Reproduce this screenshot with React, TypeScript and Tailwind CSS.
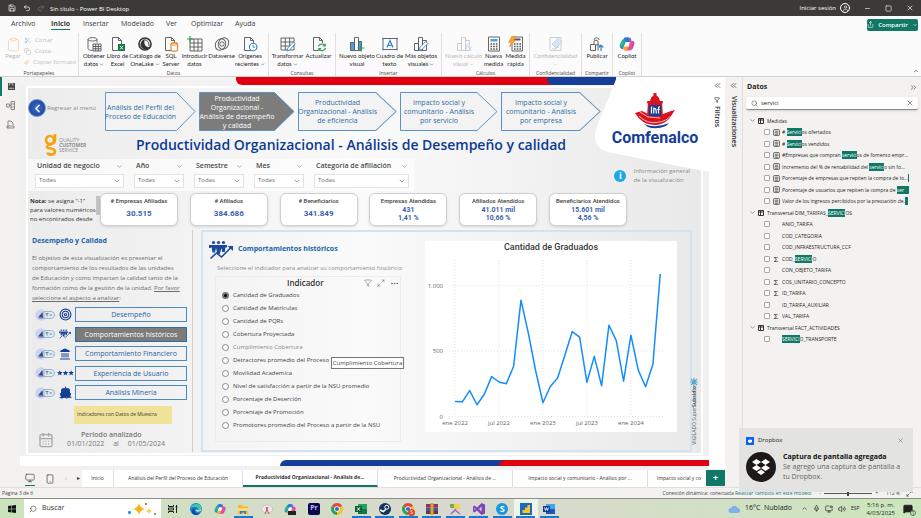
import React from "react";
import {
  CalendarDays, ChevronDown, ChevronLeft, ChevronUp, ChevronsLeft, ChevronsRight, Clipboard, Copy, Filter,
  Landmark, Minus, Monitor, MoreHorizontal, Paintbrush, Redo2, Save, Scissors, Search, Share,
  Ship, Smartphone, Square, Target, Undo2, User, X, Maximize2, Volume2, MonitorDot, Mic, MessageSquareText,
} from "lucide-react";

/* ---------- ribbon icons ---------- */
const S = ({ children, dim }: { children: React.ReactNode; dim?: boolean }) => (
  <svg viewBox="0 0 16 16" className={dim ? "size-4 opacity-30" : "size-4"} fill="none" stroke="#555" strokeWidth="0.9">
    {children}
  </svg>
);
const Doc = () => <path d="M2.5 1.5h6l3 3v10h-9zM8.5 1.5v3h3" />;
const Bars = () => <path d="M1.500 7.500h4v7h-4zM5.500 1.500h4v13h-4zM9.500 4.500h4v10h-4z" />;
const icons: Record<string, React.ReactNode> = {
  obtener: <S><path d="M2 3.500c0-2.500 9-2.500 9 0v3M2 3.500v9c0 1.500 3 2 4.500 2M2 3.500c0 2 9 2 9 0" /><path d="M7 8h8v7H7zM7 10.500h8M7 12.800h8M9.700 8v7M12.300 8v7" /></S>,
  excel: <S><Doc /><path d="M8 8h7v7H8z" fill="#107c41" stroke="none" /><path d="M10 9.800l3 3.600M13 9.800l-3 3.600" stroke="#fff" /></S>,
  onelake: <S><circle cx="8" cy="8" r="6" strokeWidth="1.600" stroke="#333" /><path d="M8 3c-4 1-6 6-3 9 2 2 6 2 8-1-4 1-7-3-5-8z" fill="#333" stroke="none" /><path d="M8 4c3 0 4 3 4 6" stroke="#333" /></S>,
  sql: <S><Doc /><path d="M8 8v6c0 1.600 6.500 1.600 6.500 0V8c0-1.600-6.500-1.600-6.500 0z" fill="#fff" stroke="#e8842c" strokeWidth="1.200" /><ellipse cx="11.200" cy="8" rx="3.200" ry="1.200" stroke="#e8842c" /></S>,
  introducir: <S><path d="M3 3h12v12H3zM3 7h12M3 11h12M7 3v12M11 3v12" /><path d="M3 0v6M0 3h6" stroke="#2f9e50" strokeWidth="1.200" /></S>,
  dataverse: <S><ellipse cx="6.500" cy="8.500" rx="5" ry="6" transform="rotate(30 6.500 8.500)" /><ellipse cx="9.500" cy="7.500" rx="5" ry="6" transform="rotate(30 9.500 7.500)" /><circle cx="8" cy="8" r="2.200" /></S>,
  origenes: <S><Doc /><circle cx="11.200" cy="11" r="3.800" fill="#fff" stroke="#2b88d8" strokeWidth="1.100" /><path d="M11.200 9v2.200h1.800" stroke="#2b88d8" /></S>,
  transformar: <S><path d="M1 2h13v12H1zM1 6h13M1 10h13M5.300 2v12M9.700 2v12" /><path d="M7 15l.8-3L13.500 6l1.800 1.800L9.500 14z" fill="#fff" stroke="#2b88d8" /></S>,
  actualizar: <S><Doc /><path d="M7 7h9v9H7z" fill="#fbfbfb" stroke="none" /><path d="M7.500 10.500a3.500 3.500 0 0 1 6.500-.5M14.500 12a3.500 3.500 0 0 1-6.500.8M14.200 7.500V10h-2.500M7.800 15v-2.300h2.400" fill="none" stroke="#2f9e50" strokeWidth="1.200" /></S>,
  nuevo: <S><path d="M1.500 6.500h4v8h-4z" fill="#4ba0e8" /><path d="M5.500 1.500h4v13h-4z" fill="#fff" /><path d="M9.500 5.500h3v9h-3z" fill="#4ba0e8" /><path d="M12 8.500v7M8.500 12h7" stroke="#2f9e50" strokeWidth="1.100" /></S>,
  cuadro: <S><path d="M1 2.500h14v11H1z" /><path d="M5 11.500L8 4.500l3 7M6 9.300h4" stroke="#2b88d8" strokeWidth="1.200" /><path d="M.3 1.800h1.500v1.500H.3zM14.200 1.800h1.500v1.500h-1.500zM.3 12.700h1.500v1.500H.3zM14.200 12.700h1.500v1.500h-1.500z" fill="#2b88d8" stroke="none" /></S>,
  mas: <S><Bars /><path d="M6 14.500l.8-3 6-6 2 2-6 6z" fill="#fff" stroke="#2b88d8" /></S>,
  calculo: <S dim><Bars /><path d="M9 15c2 0 1.500-8 4-8M9.500 10h3M12.500 11l3 4M15.500 11l-3 4" stroke="#2b88d8" /></S>,
  medida: <S><path d="M2.500 1h11v14h-11z" /><path d="M4.500 3h7v2.500h-7z" fill="#4ba0e8" stroke="none" /><path d="M4.500 8h7M4.500 10.500h7M4.500 13h7" strokeDasharray="1.600 1.100" strokeWidth="1.500" /></S>,
  rapida: <S><path d="M4 1h10.500v14H4z" /><path d="M6 3.500h6.500" strokeWidth="2" /><path d="M6 8h7M6 10.500h7M6 13h7" strokeDasharray="1.600 1.100" strokeWidth="1.500" /><path d="M4 0h4L5.500 4H8L1.500 11 3 6.500H.500z" fill="#f7a13a" stroke="#e8842c" strokeWidth=".5" /></S>,
  conf: <S dim><path d="M2 1.500h11v13H2z" /><path d="M4 8l6-6 4 4-6 6zM5 9.500l6-6M7 11l6-6" fill="#9cc8ee" stroke="#2b88d8" /><path d="M4 12l2 1.500 5-3" /></S>,
  publicar: <S><path d="M1.500 8.500h5v6h-5zM5 8V5c0-1 4-1 4 0v9.500M5 4c0-3 5-3 5 0" /><path d="M6.500 14.500V10c1-2 4-2 4 0" /><path d="M12 15V9.500M9.800 11.500L12 9.200l2.300 2.300" stroke="#2b88d8" strokeWidth="1.200" /></S>,
};
const CopilotIcon = ({ className }: { className: string }) => (
  <svg viewBox="0 0 16 16" className={className}>
    <path d="M5 2.200C6 1 10 1 11 2.500L12 6H6.500L4 13C1 13 .5 10.500 1 8.500z" fill="#1b7fe0" />
    <path d="M1 8.500L3 4C4 3 6 4 6 5L4.500 10c-.5 2-2 1.500-2.500 1z" fill="#2ab58a" />
    <path d="M10 1.500c2 0 2 1 2.500 3.500H14c2 .5 1.500 3 1 4.500L13.500 13c-1 1.500-3 1.500-4 1.500l1.500-5z" fill="#b24ee0" />
    <path d="M4 11h5.500l2-5.500c1-.8 3 0 3 .5L12 13c-.8 1.500-5 2-7 1z" fill="#f0517a" />
    <path d="M4 11.500l1.500-1H9l-1 4H6c-1.500 0-2-1-2-3z" fill="#f7a92c" />
    <path d="M6.800 6h3.600L9.200 10H5.600z" fill="#fff" />
  </svg>
);

type Btn = { w: string; icon: React.ReactNode; lines: string[]; dim?: boolean; drop?: boolean };
const Tool = ({ w, icon, lines, dim, drop }: Btn) => (
  <button className={`${w} flex shrink-0 flex-col items-center whitespace-nowrap pt-[3px] font-['Lato',sans-serif] text-[6px] leading-[8px] ${dim ? "text-[#b8b7b6]" : "text-[#292827]"}`}>
    <span className="flex size-4 items-center justify-center">{icon}</span>
    {lines.map((l, i) => (
      <span key={l} className="flex h-[8px] items-center gap-px">
        {l}
        {drop && i === lines.length - 1 && <ChevronDown className="size-[5px]" />}
      </span>
    ))}
  </button>
);
const Group = ({ name, className, children }: { name: string; className: string; children: React.ReactNode }) => (
  <section aria-label={name} className={`${className} flex h-[43px] shrink-0 flex-col justify-between border-r border-[#e1dfdd]`}>
    <div className="flex justify-center">{children}</div>
    <div className="text-center text-[5px] leading-[6px] text-[#484644]">{name}</div>
  </section>
);

const Ribbon = () => (
  <header className="border-b border-[#d2d0ce] bg-[#fbfbfb]">
    <div className="flex h-4 items-center bg-[#3b3a39] pr-[7px] text-[7px] text-white">
      <Save className="ml-2 size-[8px]" />
      <Undo2 className="ml-[7px] size-[8px]" />
      <Redo2 className="ml-[6px] size-[8px] text-[#797775]" />
      <span className="ml-[5px] pt-[2px] text-[6px]">Sin título - Power BI Desktop</span>
      <span className="ml-auto text-[6px]">Iniciar sesión</span>
      <span className="ml-1 flex size-[10px] items-center justify-center rounded-full border border-white"><User className="size-[7px]" /></span>
      <button aria-label="Minimizar" className="ml-[14px]"><Minus className="size-[7px]" /></button>
      <button aria-label="Maximizar" className="ml-[14px]"><Square className="size-[7px]" /></button>
      <button aria-label="Cerrar" className="ml-[14px]"><X className="size-[8px]" /></button>
    </div>
    <nav className="flex h-[17px] items-center pl-[11px] pr-[3px] text-[7px] leading-[10px] text-[#3b3a39]">
      {[["Archivo", "w-[40px]"], ["Inicio", "w-[32px]"], ["Insertar", "w-[38px]"], ["Modelado", "w-[45px]"], ["Ver", "w-[25px]"], ["Optimizar", "w-[44px]"], ["Ayuda", "w-[30px]"]].map(([t, w]) => (
        <div key={t} className={w}>
          <button className={t === "Inicio" ? "border-b border-[#117865] font-bold" : "border-b border-transparent"}>{t}</button>
        </div>
      ))}
      <button className="ml-auto flex h-[12px] w-[51px] items-center justify-center gap-1 rounded-xs bg-[#117865] text-[6px] font-semibold text-white">
        <Share className="size-[7px]" />Compartir<ChevronDown className="size-[6px]" />
      </button>
    </nav>
    <div className="flex">
      <Group name="Portapapeles" className="w-[79px]">
        <Tool w="w-[22px]" dim icon={<Clipboard className="size-[15px] stroke-1 text-[#e8c9a4]" />} lines={["Pegar"]} />
        <div className="flex w-[52px] flex-col text-[6px] text-[#c0bfbe]">
          <button className="flex h-[11px] items-center gap-1 pt-[3px]"><Scissors className="size-[7px] text-[#9cbfd8]" />Cortar</button>
          <button className="flex h-[11px] items-center gap-1 pt-[3px]"><Copy className="size-[7px]" />Copia</button>
          <button className="flex h-[11px] items-center gap-1 whitespace-nowrap pt-[4px]"><Paintbrush className="size-[7px] text-[#e8c08c]" />Copiar formato</button>
        </div>
      </Group>
      <Group name="Datos" className="w-[190px]">
        <Tool w="w-[23px]" icon={icons.obtener} lines={["Obtener", "datos"]} drop />
        <Tool w="w-[24px]" icon={icons.excel} lines={["Libro de", "Excel"]} />
        <Tool w="w-[31px]" icon={icons.onelake} lines={["Catálogo de", "OneLake"]} drop />
        <Tool w="w-[21px]" icon={icons.sql} lines={["SQL", "Server"]} />
        <Tool w="w-[26px]" icon={icons.introducir} lines={["Introducir", "datos"]} />
        <Tool w="w-[28px]" icon={icons.dataverse} lines={["Dataverse"]} />
        <Tool w="w-[29px]" icon={icons.origenes} lines={["Orígenes", "recientes"]} drop />
      </Group>
      <Group name="Consultas" className="w-[67px]">
        <Tool w="w-[33px]" icon={icons.transformar} lines={["Transformar", "datos"]} drop />
        <Tool w="w-[29px]" icon={icons.actualizar} lines={["Actualizar"]} />
      </Group>
      <Group name="Insertar" className="w-[106px]">
        <Tool w="w-[36px]" icon={icons.nuevo} lines={["Nuevo objeto", "visual"]} />
        <Tool w="w-[29px]" icon={icons.cuadro} lines={["Cuadro de", "texto"]} />
        <Tool w="w-[34px]" icon={icons.mas} lines={["Más objetos", "visuales"]} drop />
      </Group>
      <Group name="Cálculos" className="w-[88px]">
        <Tool w="w-[38px]" dim icon={icons.calculo} lines={["Nuevo cálculo", "visual"]} drop />
        <Tool w="w-[22px]" icon={icons.medida} lines={["Nueva", "medida"]} />
        <Tool w="w-[22px]" icon={icons.rapida} lines={["Medida", "rápida"]} />
      </Group>
      <Group name="Confidencialidad" className="w-[52px]">
        <Tool w="w-[44px]" dim icon={icons.conf} lines={["Confidencialidad", ""]} drop />
      </Group>
      <Group name="Compartir" className="w-[31px]"><Tool w="w-[26px]" icon={icons.publicar} lines={["Publicar"]} /></Group>
      <Group name="Copilot" className="w-[29px]"><Tool w="w-[26px]" icon={<CopilotIcon className="size-4" />} lines={["Copilot"]} /></Group>
      <button aria-label="Contraer cinta" className="ml-auto mr-[2px] self-end pb-[2px]"><ChevronUp className="size-[6px]" /></button>
    </div>
  </header>
);

/* ---------- report ---------- */
const steps = [
  { w: "w-[91px]", lines: ["Análisis del Perfil del", "Proceso de Educación"] },
  { w: "w-[96px]", lines: ["Productividad", "Organizacional -", "Análisis de desempeño", "y calidad"], on: true },
  { w: "w-[99px]", lines: ["Productividad", "Organizacional - Análisis", "de eficiencia"] },
  { w: "w-[98px]", lines: ["Impacto social y", "comunitario - Análisis", "por servicio"] },
  { w: "w-[100px]", lines: ["Impacto social y", "comunitario - Análisis", "por empresa"] },
];
const filters = [
  ["Unidad de negocio", "w-[89px]"], ["Año", "w-[50px]"], ["Semestre", "w-[50px]"], ["Mes", "w-[50px]"], ["Categoría de afiliación", "w-[95px]"],
];
const cards = [
  { t: "# Empresas Afiliadas", v: ["30.515"] }, { t: "# Afiliados", v: ["384.686"] }, { t: "# Beneficiarios", v: ["341.849"] },
  { t: "Empresas Atendidas", v: ["431", "1,41 %"] }, { t: "Afiliados Atendidos", v: ["41.011 mil", "10,66 %"] },
  { t: "Beneficiarios Atendidos", v: ["15.601 mil", "4,56 %"] },
];
const People = ({ className }: { className: string }) => (
  <svg viewBox="0 0 24 20" className={className} fill="#1b4a9c">
    <circle cx="4.500" cy="2.500" r="1.600" /><circle cx="9.500" cy="2.500" r="1.600" /><circle cx="14.500" cy="2.500" r="1.600" />
    <path d="M0 5h18v2.500h-1.500V6.500L15.800 12h-2.600L12.500 8l-1.700 6H8.300L7 8l-1 4.500H3.500L2.500 7 1.500 8H0z" />
    <path d="M1.500 18.500l6-5.500 5 4 9-9" fill="none" stroke="#1b4a9c" strokeWidth="1.600" /><path d="M18.500 6H24v5z" />
  </svg>
);
const Stars = () => (
  <svg viewBox="0 0 18 6" className="h-[6px] w-[17px]" fill="#143e98">
    {[0, 6, 12].map((x) => <path key={x} transform={`translate(${x} 0)`} d="M3 0l.8 2H6L4.300 3.400 5 5.700 3 4.400 1 5.700l.7-2.300L0 2h2.200z" />)}
  </svg>
);
const aspects: [string, React.ReactNode][] = [
  ["Desempeño", <Target className="size-[13px] text-[#143e98]" />],
  ["Comportamientos históricos", <People className="h-[10px] w-[12px]" />],
  ["Comportamiento Financiero", <Landmark className="size-[12px] fill-[#143e98] text-[#143e98]" />],
  ["Experiencia de Usuario", <Stars />],
  ["Análisis Minería", <Ship className="size-[13px] fill-[#143e98] text-[#143e98]" />],
];
const Pointer = () => (
  <svg viewBox="0 0 20 12" className="h-[12px] w-[20px]">
    <circle cx="6" cy="6" r="5.800" fill="#ccd4ee" /><path d="M3 8.500L7.500 3l.5 5.500z" fill="#3a4884" /><path d="M2.500 9.500h6v-1.500z" fill="#5c6aa8" />
    <path d="M9 2.500h7.500q3 .5 3 3.500t-3 3.500H9z" fill="#dfeaf2" stroke="#86a8c4" strokeWidth=".8" /><path d="M10.500 4.500h3M12 4.500v3M14.500 6h2.500" stroke="#4d6d8c" strokeWidth=".8" />
  </svg>
);
const indicators = [
  "Cantidad de Graduados", "Cantidad de Matrículas", "Cantidad de PQRs", "Cobertura Proyectada", "Cumplimiento Cobertura",
  "Detractores promedio del Proceso", "Movilidad Academica", "Nivel de satisfacción a partir de la NSU promedio",
  "Porcentaje de Deserción", "Porcentaje de Promoción", "Promotores promedio del Proceso a partir de la NSU",
];
const values = [115, 112, 198, 90, 170, 305, 264, 250, 385, 890, 640, 350, 105, 230, 295, 470, 650, 608, 262, 460, 235, 698, 580, 270, 622, 355, 228, 400, 1090];
const Chart = () => {
  const x = (i: number) => 30 + i * 7.33;
  const y = (v: number) => 175.500 - v * 0.1307;
  return (
    <figure className="flex min-w-0 flex-1 flex-col bg-white">
      <svg viewBox="0 0 252 191" className="w-full font-['Open_Sans',sans-serif]">
        <text x="126" y="9" textAnchor="middle" className="fill-[#3a3a3a] font-['Roboto',sans-serif] text-[9px] font-medium">Cantidad de Graduados</text>
        <g stroke="#dcdcdc" strokeWidth="0.8" strokeDasharray="1 2">
          {[0, 500, 1000].map((v) => <line key={v} x1="24" x2="240" y1={y(v)} y2={y(v)} />)}
          {[0, 6, 12, 18, 24].map((i) => <line key={i} x1={x(i)} x2={x(i)} y1="19" y2="175" />)}
        </g>
        <g className="fill-[#666] text-[6px]">
          {[["0", 0], ["500", 500], ["1.000", 1000]].map(([t, v]) => <text key={t} x="18" y={y(Number(v)) + 2} textAnchor="end">{t}</text>)}
          {["ene 2022", "jul 2022", "ene 2023", "jul 2023", "ene 2024"].map((t, i) => <text key={t} x={x(i * 6)} y="184" textAnchor="middle">{t}</text>)}
        </g>
        <polyline fill="none" stroke="#118dff" strokeWidth="1.500" strokeLinejoin="round" points={values.map((v, i) => `${x(i)},${y(v)}`).join(" ")} />
      </svg>
    </figure>
  );
};

const Brand = () => (
  <div className="absolute right-0 top-0 h-[96px] w-[115px]">
    <svg viewBox="0 0 115 96" className="absolute inset-0 size-full"><path d="M23 0H115V95L18 76Q1 73 1 60Q1 54 3 49Z" fill="#fff" /></svg>
    <div className="relative flex flex-col items-center pl-[7px] pt-[16px]">
      <svg viewBox="0 0 40 36" className="h-[36px] w-[40px]">
        <path d="M15 10Q15 3 20 2Q25 3 25 10z" fill="#d8131f" /><rect x="18.500" y="0" width="3" height="3" fill="#d8131f" />
        <path d="M13 9h14l1 15H12z" fill="#d8131f" /><rect x="12" y="8" width="16" height="2.500" rx="1" fill="#d8131f" /><path d="M14 12h12v11H14z" fill="#143e98" />
        <path d="M16.500 13.500v7M18.800 14.500v6M18.800 16c2-1 2.500 0 2.500 4.500M23.500 20.500v-6l1.200-1M22.400 16.500h2.300" stroke="#fff" strokeWidth="1.200" fill="none" />
        <path d="M0 20l7-2 6 3v3h14l1-3 8-3 4-1-6 9q-6 6-15 6-12 0-19-12z" fill="#d8131f" />
        <path d="M4 23q8 8 18 6.500t13-6M5 19l8 5 12 1" stroke="#fff" strokeWidth=".7" fill="none" />
        <path d="M9 31q12 5 25-1l-3 3q-10 4-18 1z" fill="#143e98" />
      </svg>
      <div className="font-['Roboto',sans-serif] text-[16px] font-bold leading-[18px] text-[#143e98]">Comfenalco</div>
    </div>
  </div>
);

const Report = () => (
  <div className="relative flex min-w-0 flex-1 flex-col bg-[#f0f0f0]">
    <div className="flex h-[9px] bg-[#f4f2f2] pl-[216px] pr-[93px]">
      <div className="flex h-[8px] flex-1 rounded-bl-md bg-[#e1000f]"><div className="ml-auto w-[69px] rounded-bl-md bg-[#143e98]" /></div>
    </div>
    <div className="mx-[6px] border-2 border-white bg-gradient-to-r from-[#ececec] via-[#fafafa] to-[#e9e9ea] pb-px pt-[4px]">
      <nav className="flex h-[40px] items-start">
        <button className="flex h-[32px] w-[77px] items-center whitespace-nowrap text-[6px] text-[#8a8a8a]">
          <span className="mr-px flex size-[18px] shrink-0 items-center justify-center rounded-full border border-[#6f90d0] bg-radial from-[#3f6fd0] to-[#123a8c] text-white"><ChevronLeft className="size-[13px] stroke-[2.500]" /></span>
          Regresar al menú
        </button>
        <div className="flex gap-[3px]">
          {steps.map((s) => (
            <button key={s.lines.join()} className={`${s.w} relative flex h-[39px] shrink-0 flex-col items-center justify-center whitespace-nowrap pr-[20px] text-[7px] leading-[9px] ${s.on ? "text-white" : "text-[#2e6ca4]"}`}>
              <svg viewBox="0 0 98 39" preserveAspectRatio="none" className="absolute inset-0 size-full">
                <path d="M.5 .5H77L97 19.500L77 38.500H.5z" fill={s.on ? "#7c7c7c" : "#f3f3f3"} stroke="#5b94c4" />
              </svg>
              {s.lines.map((l) => <span key={l} className="relative">{l}</span>)}
            </button>
          ))}
        </div>
      </nav>
      <div className="flex h-[26px] items-center">
        <div className="flex w-[108px] items-center gap-[2px] pl-[16px]">
          <svg viewBox="0 0 13 22" className="h-[22px] w-[13px]" fill="none" stroke="#f2a30f" strokeWidth="2.600">
            <circle cx="6" cy="6" r="4" /><path d="M11 0v6c0 6-8 3-8 7 0 2 8 .5 8 4.500 0 4-7 4-7.500 1" />
          </svg>
          <div className="text-[5px] leading-[5px] text-[#8a8a8a]">QUALITY<br /><b>CUSTOMER</b><br />SERVICE</div>
        </div>
        <h1 className="whitespace-nowrap text-[14px] font-semibold leading-[20px] text-[#0b3a92]">Productividad Organizacional - Análisis de Desempeño y calidad</h1>
      </div>
      <div className="flex h-[33px] items-center pr-[11px]">
        <div className="flex gap-[10px] bg-white/60 pb-[3px] pl-[7px] pr-[5px]">
          {filters.map(([t, w]) => (
            <label key={t} className={`${w} flex flex-col text-[7px] font-semibold text-[#4a4a4a]`}>
              <span className="flex h-[15px] items-center justify-between whitespace-nowrap pl-[2px] pr-px">{t}<ChevronDown className="size-[7px] stroke-[1.500]" /></span>
              <span className="flex h-[14px] items-center border border-[#e4e4e4] bg-white pr-[2px] font-normal">
                <select className="min-w-0 flex-1 appearance-none pl-[3px] text-[6px] text-[#6b6b6b]"><option>Todas</option></select>
                <ChevronDown className="pointer-events-none size-[8px] stroke-[1.500]" />
              </span>
            </label>
          ))}
        </div>
        <div className="ml-auto flex items-center gap-[7px] pt-[2px] text-[6px] leading-[9px] text-[#8a8a8a]">
          <span className="flex size-[12px] items-center justify-center rounded-full bg-[#1ba8ea] font-['Liberation_Serif',serif] text-[10px] font-bold text-white">i</span>
          <div>Información general<br />de la visualización</div>
        </div>
      </div>
      <div className="mt-[2px] flex h-[33px]">
        <div className="flex w-[72px] shrink-0 overflow-hidden pl-[2px] text-[6px] leading-[9px] text-[#333]">
          <p className="flex-1 whitespace-nowrap pt-[4px]"><b>Nota:</b> se asigna “-1”<br />para valores numéricos<br />no encontrados desde</p>
          <span className="mr-[5px] mt-[3px] h-[19px] w-[4px] shrink-0 bg-[#c4c4c4]" />
        </div>
        <div className="flex w-[527px] justify-between font-['Roboto',sans-serif]">
          {cards.map((c) => (
            <div key={c.t} className="flex w-[78px] flex-col items-center rounded-md border border-[#d0d0d0] bg-white pt-px shadow-sm">
              <div className="whitespace-nowrap text-[6px] font-medium leading-[11px] text-[#444]">{c.t}</div>
              <div className="flex flex-1 flex-col items-center justify-center pb-[3px] text-[7px] font-bold leading-[8px] text-[#3a5fae]">
                {c.v.map((v) => <span key={v} className={c.v.length === 1 ? "text-[8px]" : ""}>{v}</span>)}
              </div>
            </div>
          ))}
        </div>
      </div>
      <div className="mt-[4px] flex h-[222px]">
        <aside className="flex w-[165px] shrink-0 flex-col border-r border-[#cfcfcf] pl-[4px] pr-[5px]">
          <h2 className="pt-[6px] text-[7px] font-bold leading-[10px] text-[#1763a8]">Desempeño y Calidad</h2>
          <p className="mt-[7px] whitespace-nowrap text-[6px] leading-[10px] text-[#6b6b6b]">
            El objetivo de esta visualización es presentar el<br />comportamiento de los resultados de las unidades<br />de Educación y como impactan la calidad tanto de la<br />formación como de la gestión de la unidad. <u>Por favor</u><br /><u>seleccione el aspecto a analizar</u>:
          </p>
          <div className="mt-[4px] flex h-[93px] flex-col justify-between">
            {aspects.map(([t, icon], i) => (
              <div key={t} className="flex h-[15px] items-center">
                <span className="pl-[3px]"><Pointer /></span>
                <span className="flex w-[20px] items-center justify-center">{icon}</span>
                <button className={i === 1 ? "h-[15px] flex-1 border border-[#2f6ea3] bg-[#7c7c7c] text-[7px] leading-[13px] text-white" : "h-[15px] flex-1 border border-[#4a8abf] text-[7px] leading-[13px] text-[#1f66a8]"}>{t}</button>
              </div>
            ))}
          </div>
          <div className="ml-[42px] mt-[6px] flex h-[18px] w-[98px] items-center whitespace-nowrap bg-[#f1e29a] pl-[3px] text-[5px] text-[#3a3a3a]">Indicadores con Datos de Muestra</div>
          <div className="flex items-end pl-[6px] pt-[6px] text-[7px] leading-[9px] text-[#777]">
            <CalendarDays className="mr-[13px] size-[16px] text-[#a8a8a8]" />
            <div className="w-[98px]">
              <div className="pl-[14px] font-semibold">Periodo analizado</div>
              <div className="flex justify-between"><span>01/01/2022</span><span>al</span><span>01/05/2024</span></div>
            </div>
          </div>
        </aside>
        <section className="ml-[8px] mr-[9px] flex min-w-0 flex-1 border-2 border-[#d3e3f1] pl-[6px]">
          <div className="w-[216px] shrink-0">
            <div className="flex h-[30px] items-center gap-[5px] pt-[5px]">
              <People className="h-[20px] w-[24px]" />
              <h2 className="text-[7px] font-bold text-[#1763a8]">Comportamientos históricos</h2>
            </div>
            <p className="ml-[8px] whitespace-nowrap text-[6px] leading-[12px] text-[#8a8a8a]">Seleccione el indicador para analizar su comportamiento histórico:</p>
            <fieldset className="ml-[6px] mt-[2px] h-[166px] w-[186px] border border-[#ececec]">
              <div className="flex h-[12px] items-center justify-end gap-[5px] pr-px text-[#666]">
                <legend className="w-[72px] text-[8px] font-semibold text-[#333]">Indicador</legend>
                <Filter className="size-[8px] stroke-[1.500]" /><Maximize2 className="size-[8px] stroke-[1.500]" /><MoreHorizontal className="size-[9px]" />
              </div>
              {indicators.map((t, i) => (
                <label key={t} className={i === 4 ? "relative flex h-[13px] items-center gap-[4px] whitespace-nowrap pl-[6px] text-[6px] text-[#888]" : "flex h-[13px] items-center gap-[4px] whitespace-nowrap pl-[6px] text-[6px] text-[#444]"}>
                  <input type="radio" name="indicador" defaultChecked={i === 0} className="size-[7px] appearance-none rounded-full border border-[#8a8a8a] bg-white checked:border-[2px] checked:border-[#777] checked:bg-black" />
                  {t}
                  {i === 4 && <span role="tooltip" className="absolute left-[115px] top-[16px] z-10 flex h-[12px] w-[73px] items-center justify-center border border-[#767676] bg-white text-[6px] text-[#444]">Cumplimiento Cobertura</span>}
                </label>
              ))}
            </fieldset>
          </div>
          <div className="mt-[9px] flex min-w-0 flex-1 items-start pr-[13px]"><Chart /></div>
        </section>
      </div>
    </div>
    <div className="mt-px flex h-[10px] bg-white pl-[260px] pt-[4px]">
      <div className="flex flex-1 rounded-tl-md bg-[#143e98]"><div className="ml-auto w-[210px] rounded-tl-md bg-[#e1000f]" /></div>
    </div>
    <Brand />
    <div className="absolute bottom-[24px] right-[11px] flex flex-col items-center">
      <svg viewBox="0 0 8 8" className="size-[8px]" fill="none" stroke="#5ca6cc" strokeWidth="1.200"><path d="M4 0v8M0 4h8M1 1l6 6M7 1L1 7" /></svg>
      <div className="rotate-180 whitespace-nowrap text-[5px] leading-[7px] text-[#555] [writing-mode:vertical-rl]">VIGILADO Super<b>Subsidio</b></div>
    </div>
  </div>
);

const pages = [
  ["Inicio", "w-[32px]"], ["Análisis del Perfil del Proceso de Educación", "w-[129px]"], ["Productividad Organizacional - Análisis de...", "w-[135px]"],
  ["Productividad Organizacional - Análisis de ...", "w-[135px]"], ["Impacto social y comunitario - Análisis por ...", "w-[135px]"],
];
const PageTabs = () => (
  <nav className="flex h-[18px] items-stretch bg-[#f3f2f1] pt-px text-[5px] text-[#333]">
    <div className="flex w-[62px] shrink-0 items-center gap-[10px] pl-[5px]">
      <span className="flex h-[15px] items-center border-b border-[#117865]"><Monitor className="size-[10px] stroke-[1.500]" /></span>
      <Smartphone className="size-[10px] stroke-[1.500]" />
      <span className="text-[6px] text-[#aaa]">‹</span><span className="text-[6px]">▸</span>
    </div>
    {pages.map(([t, w], i) => (
      <button key={t} className={i === 2 ? `${w} shrink-0 whitespace-nowrap border-b-2 border-r border-[#117865] border-r-[#e1dfdd] bg-white pt-px font-bold` : `${w} shrink-0 whitespace-nowrap border-r border-[#e1dfdd] bg-white`}>{t}</button>
    ))}
    <button className="min-w-0 flex-1 whitespace-nowrap bg-white pl-[9px] text-left">Impacto social y co</button>
    <button aria-label="Nueva página" className="mb-px w-[19px] shrink-0 bg-[#117865] text-[9px] font-bold leading-[14px] text-white">+</button>
  </nav>
);

/* ---------- data pane ---------- */
type Field = { t: [string, string, string]; icon?: "calc" | "sum"; head?: boolean };
const fields: Field[] = [
  { t: ["Medidas", "", ""], head: true },
  { t: ["# ", "Servici", "os ofertados"], icon: "calc" },
  { t: ["# ", "Servici", "os vendidos"], icon: "calc" },
  { t: ["#Empresas que compran ", "servici", "os de fomento empr..."], icon: "calc" },
  { t: ["Incremento del % de rentabilidad del ", "servici", "o sin fo..."], icon: "calc" },
  { t: ["Porcentaje de empresas que repiten la compra de lo...", " ", ""], icon: "calc" },
  { t: ["Porcentaje de usuarios que repiten la compra de ", "ser    ", ""], icon: "calc" },
  { t: ["Valor de los ingresos percibidos por la prestación de.", "  ", ""], icon: "calc" },
  { t: ["Transversal DIM_TARIFAS_", "SERVICI", "OS"], head: true },
  { t: ["ANIO_TARIFA", "", ""] }, { t: ["COD_CATEGORIA", "", ""] }, { t: ["COD_INFRAESTRUCTURA_CCF", "", ""] },
  { t: ["COD_", "SERVICI", "O"], icon: "sum" }, { t: ["CON_OBJETO_TARIFA", "", ""] }, { t: ["COS_UNITARIO_CONCEPTO", "", ""], icon: "sum" },
  { t: ["ID_TARIFA", "", ""], icon: "sum" }, { t: ["ID_TARIFA_AUXILIAR", "", ""] }, { t: ["VAL_TARIFA", "", ""], icon: "sum" },
  { t: ["Transversal FACT_ACTIVIDADES", "", ""], head: true }, { t: ["", "SERVICI", "O_TRANSPORTE"] },
];
const Mark = ({ t }: { t: [string, string, string] }) => (
  <span className="flex-1 overflow-hidden whitespace-pre py-px leading-[8px]">{t[0]}{t[1] && <mark className="bg-[#117865] py-px text-white">{t[1]}</mark>}{t[2]}</span>
);
const Datos = () => (
  <aside className="w-[179px] shrink-0 border-l border-[#e1dfdd] bg-[#f3f2f1] pl-[3px] pr-[3px] text-[5px] text-[#252423]">
    <div className="flex h-[20px] items-center justify-between pl-px text-[7px] font-bold">Datos<ChevronsRight className="size-[9px] stroke-[1.500]" /></div>
    <label className="flex h-[13px] items-center rounded-xs border-b border-[#8a8886] bg-white pl-[5px] pr-[4px] shadow-sm">
      <Search className="size-[7px] stroke-[1.500]" />
      <input aria-label="Buscar campos" defaultValue="servici" className="min-w-0 flex-1 px-[3px] text-[6px] outline-none" />
      <X className="size-[8px] stroke-[1.500]" />
    </label>
    <div className="mt-[5px] flex h-[230px] flex-col">
      {fields.map((f) =>
        f.head ? (
          <div key={f.t.join()} className="flex flex-1 items-center pl-[3px]">
            <ChevronDown className="mr-[2px] size-[7px] stroke-[1.500]" />
            <svg viewBox="0 0 6 6" className="mr-[3px] size-[6px]" fill="none" stroke="#333"><path d="M.5 .5h5v5h-5zM.5 2h5M2.500 .5v5" /></svg>
            <Mark t={f.t} />
          </div>
        ) : (
          <label key={f.t.join()} className="flex flex-1 items-center pl-[18px]">
            <input type="checkbox" className="mr-[2px] size-[6px] shrink-0 appearance-none rounded-[1px] border border-[#a9a7a5] bg-white" />
            <span className="mr-[2px] flex w-[8px] shrink-0 items-center justify-center text-[8px] leading-[8px]">
              {f.icon === "sum" && "Σ"}
              {f.icon === "calc" && <svg viewBox="0 0 8 8" className="size-[7px]" fill="none" stroke="#555"><rect x=".5" y=".5" width="7" height="7" rx="1.500" /><path d="M2 2.500h4M2 4.300h4M2 6h4" /></svg>}
            </span>
            <Mark t={f.t} />
          </label>
        ),
      )}
    </div>
  </aside>
);

/* ---------- taskbar ---------- */
const tb = "size-[12px]";
const apps: { id: string; open?: boolean; active?: boolean; icon: React.ReactNode }[] = [
  { id: "Vista de tareas", icon: <svg viewBox="0 0 12 12" className={tb} fill="none" stroke="#222"><path d="M1.500 2v1.500h5V2M1.500 10V8.500h5V10M1.500 5h5v2h-5zM9.500 2v8M8.500 4h2" /></svg> },
  { id: "Edge", icon: <svg viewBox="0 0 12 12" className={tb}><circle cx="6" cy="6" r="6" fill="#1a7fd0" /><path d="M0 6C1 0 11-1 12 5c0 3-4 3-4 1 0-3-7-3-8 0z" fill="#40c8a8" /><path d="M5 5c-2 4 2 7 5 5-3 4-9 2-8-3z" fill="#0c4e9c" /><path d="M6 7q2 2 5 0" stroke="#d9e6cf" strokeWidth="1.500" fill="none" /></svg> },
  { id: "Copilot", icon: <CopilotIcon className="size-[12px]" /> },
  { id: "Explorador", open: true, icon: <svg viewBox="0 0 12 12" className={tb}><path d="M1 2h4l1 1.500h5V11H1z" fill="#f5b731" /><path d="M1 5h10v3H1z" fill="#fad97a" /><path d="M3 8h6v3H7.500V9.500h-3V11H3z" fill="#2b7fd0" /></svg> },
  { id: "Recortes", icon: <svg viewBox="0 0 12 12" className={tb}><ellipse cx="6" cy="6" rx="5.500" ry="4" fill="#eceaf0" stroke="#aaa" strokeWidth=".5" /><path d="M4 11l3-7M8 11L5 4" stroke="#d24a4a" strokeWidth="1" /></svg> },
  { id: "Microsoft 365", icon: <span className="relative"><CopilotIcon className="size-[12px]" /><span className="absolute bottom-0 right-0 h-[4px] w-[8px] bg-[#222]" /></span> },
  { id: "Premiere", icon: <span className="flex size-[12px] items-center justify-center rounded-xs bg-[#0a0a50] text-[7px] font-bold text-[#c9b8ff]">Pr</span> },
  { id: "Chrome", icon: <Chrome /> },
  { id: "Excel", open: true, icon: <svg viewBox="0 0 12 12" className={tb}><path d="M3 1h9v10H3z" fill="#21a366" /><path d="M7 6h5v5H3V6z" fill="#107c41" /><path d="M0 3h7v6H0z" fill="#0b5c30" /><path d="M2 4.300l3 3.400M5 4.300L2 7.700" stroke="#fff" /></svg> },
  { id: "Steam", open: true, icon: <svg viewBox="0 0 12 12" className={tb}><circle cx="6" cy="6" r="6" fill="#14345c" /><circle cx="7.800" cy="4.200" r="2" fill="none" stroke="#fff" /><path d="M1 7l3.500 1.500L7 6" stroke="#fff" strokeWidth="1.500" fill="none" /></svg> },
  { id: "Chrome perfil", open: true, icon: <span className="relative"><Chrome /><span className="absolute -bottom-px -right-px flex size-[7px] items-center justify-center rounded-full bg-[#e04428] text-[5px] leading-none text-white">S</span></span> },
  { id: "WinRAR", open: true, icon: <svg viewBox="0 0 12 12" className={tb}><path d="M0 1h12v3.500H0z" fill="#a03048" /><path d="M0 4.500h12V8H0z" fill="#3a58a8" /><path d="M0 8h12v3H0z" fill="#6a3a2a" /><path d="M4.500 0h3v12h-3z" fill="#d9a43a" /></svg> },
  { id: "Diagramas", open: true, icon: <svg viewBox="0 0 12 12" className={tb}><path d="M1 1h5v4H1z" fill="#7aa84a" /><path d="M5 1h6v5H5z" fill="#f2d34a" /><path d="M2 11l5-5M6 7l5 4" stroke="#9a6ac8" strokeWidth="1.500" /></svg> },
  { id: "Visual Studio", open: true, icon: <svg viewBox="0 0 12 12" className={tb}><path d="M8.500 0L12 1.500v9L8.500 12 4 7.500 1.500 9.500 0 8.500v-5l1.500-1L4 4.500zM8.500 3.500L6 6l2.500 2.500zM1.500 4.800v2.400L2.700 6z" fill="#7b46b8" /></svg> },
  { id: "Skype", open: true, icon: <span className="flex size-[12px] items-center justify-center rounded-full bg-[#1598e0] text-[9px] font-bold leading-none text-white">S</span> },
  { id: "Power BI", open: true, active: true, icon: <svg viewBox="0 0 12 12" className={tb}><path d="M0 0h12v12H0z" fill="#1c6cb8" /><path d="M7.500 2H10v8H2.500V7H5V4.500h2.500z" fill="#f7c52c" /></svg> },
  { id: "Word", open: true, icon: <svg viewBox="0 0 12 12" className={tb}><path d="M3 1h9v10H3z" fill="#41a5ee" /><path d="M3 6h9v5H3z" fill="#185abd" /><path d="M0 3h7v6H0z" fill="#103f91" /><path d="M1.500 4.500l1 3 1-3 1 3 1-3" stroke="#fff" strokeWidth=".8" fill="none" /></svg> },
];
function Chrome() {
  return (
    <svg viewBox="0 0 12 12" className="size-[12px]">
      <path d="M6 6L.8 3A6 6 0 0 1 11.200 3z" fill="#e8453c" /><path d="M6 6l5.200-3A6 6 0 0 1 6 12z" fill="#fbc116" /><path d="M6 6v6A6 6 0 0 1 .8 3z" fill="#31a350" />
      <circle cx="6" cy="6" r="2.800" fill="#fff" /><circle cx="6" cy="6" r="2.100" fill="#2a6fe0" />
    </svg>
  );
}
const Taskbar = () => (
  <footer className="flex h-[20px] items-stretch border-t border-[#8a9084] bg-gradient-to-r from-[#cbe3bb] via-[#d9d8d0] to-[#cce6bb] text-[6px] text-[#222]">
    <button aria-label="Inicio" className="flex w-[24px] items-center justify-center">
      <svg viewBox="0 0 8 8" className="size-[8px]"><path d="M0 1l3.500-.5v3.300H0zM4 .4L8 0v3.800H4zM0 4.200h3.500v3.300L0 7zM4 4.200h4V8l-4-.4z" fill="#111" /></svg>
    </button>
    <label className="flex w-[137px] items-center bg-white pl-[5px] pr-[4px]">
      <Search className="size-[8px] -scale-x-100 stroke-[1.500]" />
      <input aria-label="Buscar" placeholder="Buscar" className="min-w-0 flex-1 px-[5px] text-[7px] outline-none placeholder:text-[#333]" />
      <svg viewBox="0 0 30 14" className="h-[14px] w-[30px]">
        <path d="M12 1q1 5 6 6-5 1-6 6-1-5-6-6 5-1 6-6z" fill="#f6b31c" /><path d="M22 6q.5 2.500 3 3-2.500.5-3 3-.5-2.500-3-3 2.500-.5 3-3z" fill="#f6c84a" />
        <rect x="1" y="9" width="3" height="3" rx="1" fill="#2b9ce0" /><rect x="18" y="1" width="2" height="2" fill="#e8742c" /><rect x="27" y="11" width="2" height="2" fill="#5cb85c" />
      </svg>
    </label>
    <div className="flex w-[400px]">
      {apps.map((a) => (
        <button key={a.id} aria-label={a.id} className={`flex flex-1 items-center justify-center ${a.active ? "bg-[#edf4ea]" : ""}`}>
          <span className={a.open ? "flex h-full w-[19px] items-center justify-center border-b-2 border-[#1a78d0] pt-[2px]" : "flex"}>{a.icon}</span>
        </button>
      ))}
    </div>
    <div className="ml-auto flex items-center gap-[5px] pr-[8px]">
      <svg viewBox="0 0 12 8" className="h-[8px] w-[12px]"><path d="M3 8a2.500 2.500 0 0 1 0-5 3.500 3.500 0 0 1 6.500 0A2.500 2.500 0 0 1 9.500 8z" fill="#7fb0ea" /></svg>
      <span className="mr-[4px] whitespace-pre text-[7px]">16°C  Nublado</span>
      <ChevronUp className="size-[7px]" /><Mic className="size-[7px]" /><MonitorDot className="size-[8px]" /><Volume2 className="size-[8px]" />
      <span className="text-[5px]">ESP</span>
      <span className="ml-[2px] text-center text-[6px] leading-[8px]">5:16 p. m.<br />4/03/2025</span>
      <span className="relative ml-[3px]"><MessageSquareText className="size-[10px] fill-[#222]" /><span className="absolute -bottom-[2px] -right-[3px] size-[6px] rounded-full border border-[#666] bg-[#dbe8d2] text-center text-[5px] leading-[4px]">1</span></span>
    </div>
  </footer>
);

const Toast = () => (
  <div role="status" className="absolute bottom-[26px] right-[8px] h-[64px] w-[174px] bg-[#e3e3e1] px-[7px] pt-[8px]">
    <div className="flex items-center text-[6px] text-[#222]">
      <span className="mr-[4px] flex size-[8px] items-center justify-center bg-[#0a62f5]"><svg viewBox="0 0 4 4" className="size-[4px]"><path d="M0 1l2-.5L4 1v2L2 4 0 3z" fill="#fff" /></svg></span>
      Dropbox
      <button aria-label="Cerrar aviso" className="ml-auto mr-[2px]"><X className="size-[7px] stroke-[1.500] text-[#555]" /></button>
    </div>
    <div className="flex items-start pt-[7px]">
      <svg viewBox="0 0 30 30" className="size-[30px]">
        <circle cx="15" cy="15" r="15" fill="#1c1918" />
        <g fill="#fff"><path d="M10.500 7l4.500 3-4.500 3L6 10zM19.500 7l4.500 3-4.500 3-4.500-3zM10.500 13l4.500 3-4.500 3L6 16zM19.500 13l4.500 3-4.500 3-4.500-3zM15 17.500l4 2.800L15 23l-4-2.700z" /></g>
      </svg>
      <div className="whitespace-nowrap pl-[7px] text-[7px] leading-[10px] text-[#666]"><b className="text-[#111]">Captura de pantalla agregada</b><br />Se agregó una captura de pantalla a<br />tu Dropbox.</div>
    </div>
  </div>
);

export default function App() {
  return (
    <div className="relative flex min-h-screen flex-col overflow-hidden bg-[#f3f2f1] font-['Open_Sans',sans-serif]">
      <Ribbon />
      <main className="flex flex-1">
        <nav className="flex w-[20px] shrink-0 flex-col text-[#666]">
          <button aria-label="Informe" className="flex h-[19px] items-center justify-center border-l-2 border-[#117865]">
            <svg viewBox="0 0 8 8" className="size-[7px]"><path d="M0 0h8v8H0z" fill="#444" /><path d="M1.500 0v3M3.500 0v1.500M5.500 0v3M1 6h6" stroke="#f3f2f1" strokeWidth=".8" /></svg>
          </button>
          <button aria-label="Tabla" className="flex h-[19px] items-center justify-center"><svg viewBox="0 0 9 9" className="size-[9px]" fill="none" stroke="#888"><path d="M.5 3h3v3h-3zM5 .5h3.500v8H5zM5 3h3.500M5 6h3.500M3.500 4.500H5" /></svg></button>
          <button aria-label="Modelo" className="flex h-[19px] items-center justify-center"><svg viewBox="0 0 9 9" className="size-[9px]" fill="none" stroke="#888"><path d="M2 8V1h3l2 2v2M1 6h7v2H1z" /></svg></button>
        </nav>
        <div className="flex min-w-0 flex-1 flex-col">
          <div className="flex flex-1">
            <Report />
            <aside className="flex w-[16px] shrink-0 flex-col items-center bg-white pt-[4px]">
              <ChevronsLeft className="size-[9px] stroke-[1.500]" />
              <Filter className="mt-[7px] size-[6px]" />
              <span className="mt-[3px] whitespace-nowrap text-[7px] font-semibold leading-[10px] text-[#333] [writing-mode:vertical-rl]">Filtros</span>
            </aside>
          </div>
          <PageTabs />
        </div>
        <aside className="flex w-[17px] shrink-0 flex-col items-center pt-[4px]">
          <ChevronsLeft className="size-[9px] stroke-[1.500]" />
          <span className="mt-[6px] whitespace-nowrap text-[7px] font-semibold leading-[10px] text-[#333] [writing-mode:vertical-rl]">Visualizaciones</span>
        </aside>
        <Datos />
      </main>
      <div className="flex h-[11px] items-center border-t border-[#e1dfdd] bg-[#f3f2f1] pl-[2px] pr-[8px] pt-px text-[5px] text-[#444]">
        Página 3 de 6
        <span className="ml-auto">Conexión dinámica: conectada <a href="#cambios" className="text-[#117865]">Realizar cambios en este modelo</a></span>
        <span className="ml-[8px]">-</span>
        <input aria-label="Zoom" type="range" defaultValue="50" className="mx-[3px] h-px w-[48px] appearance-none bg-[#555] [&::-webkit-slider-thumb]:h-[5px] [&::-webkit-slider-thumb]:w-[2px] [&::-webkit-slider-thumb]:appearance-none [&::-webkit-slider-thumb]:bg-[#444]" />
        <span>+</span><span className="ml-[8px] mr-[6px]">112 %</span><Maximize2 className="size-[7px]" />
      </div>
      <Taskbar />
      <Toast />
    </div>
  );
}
